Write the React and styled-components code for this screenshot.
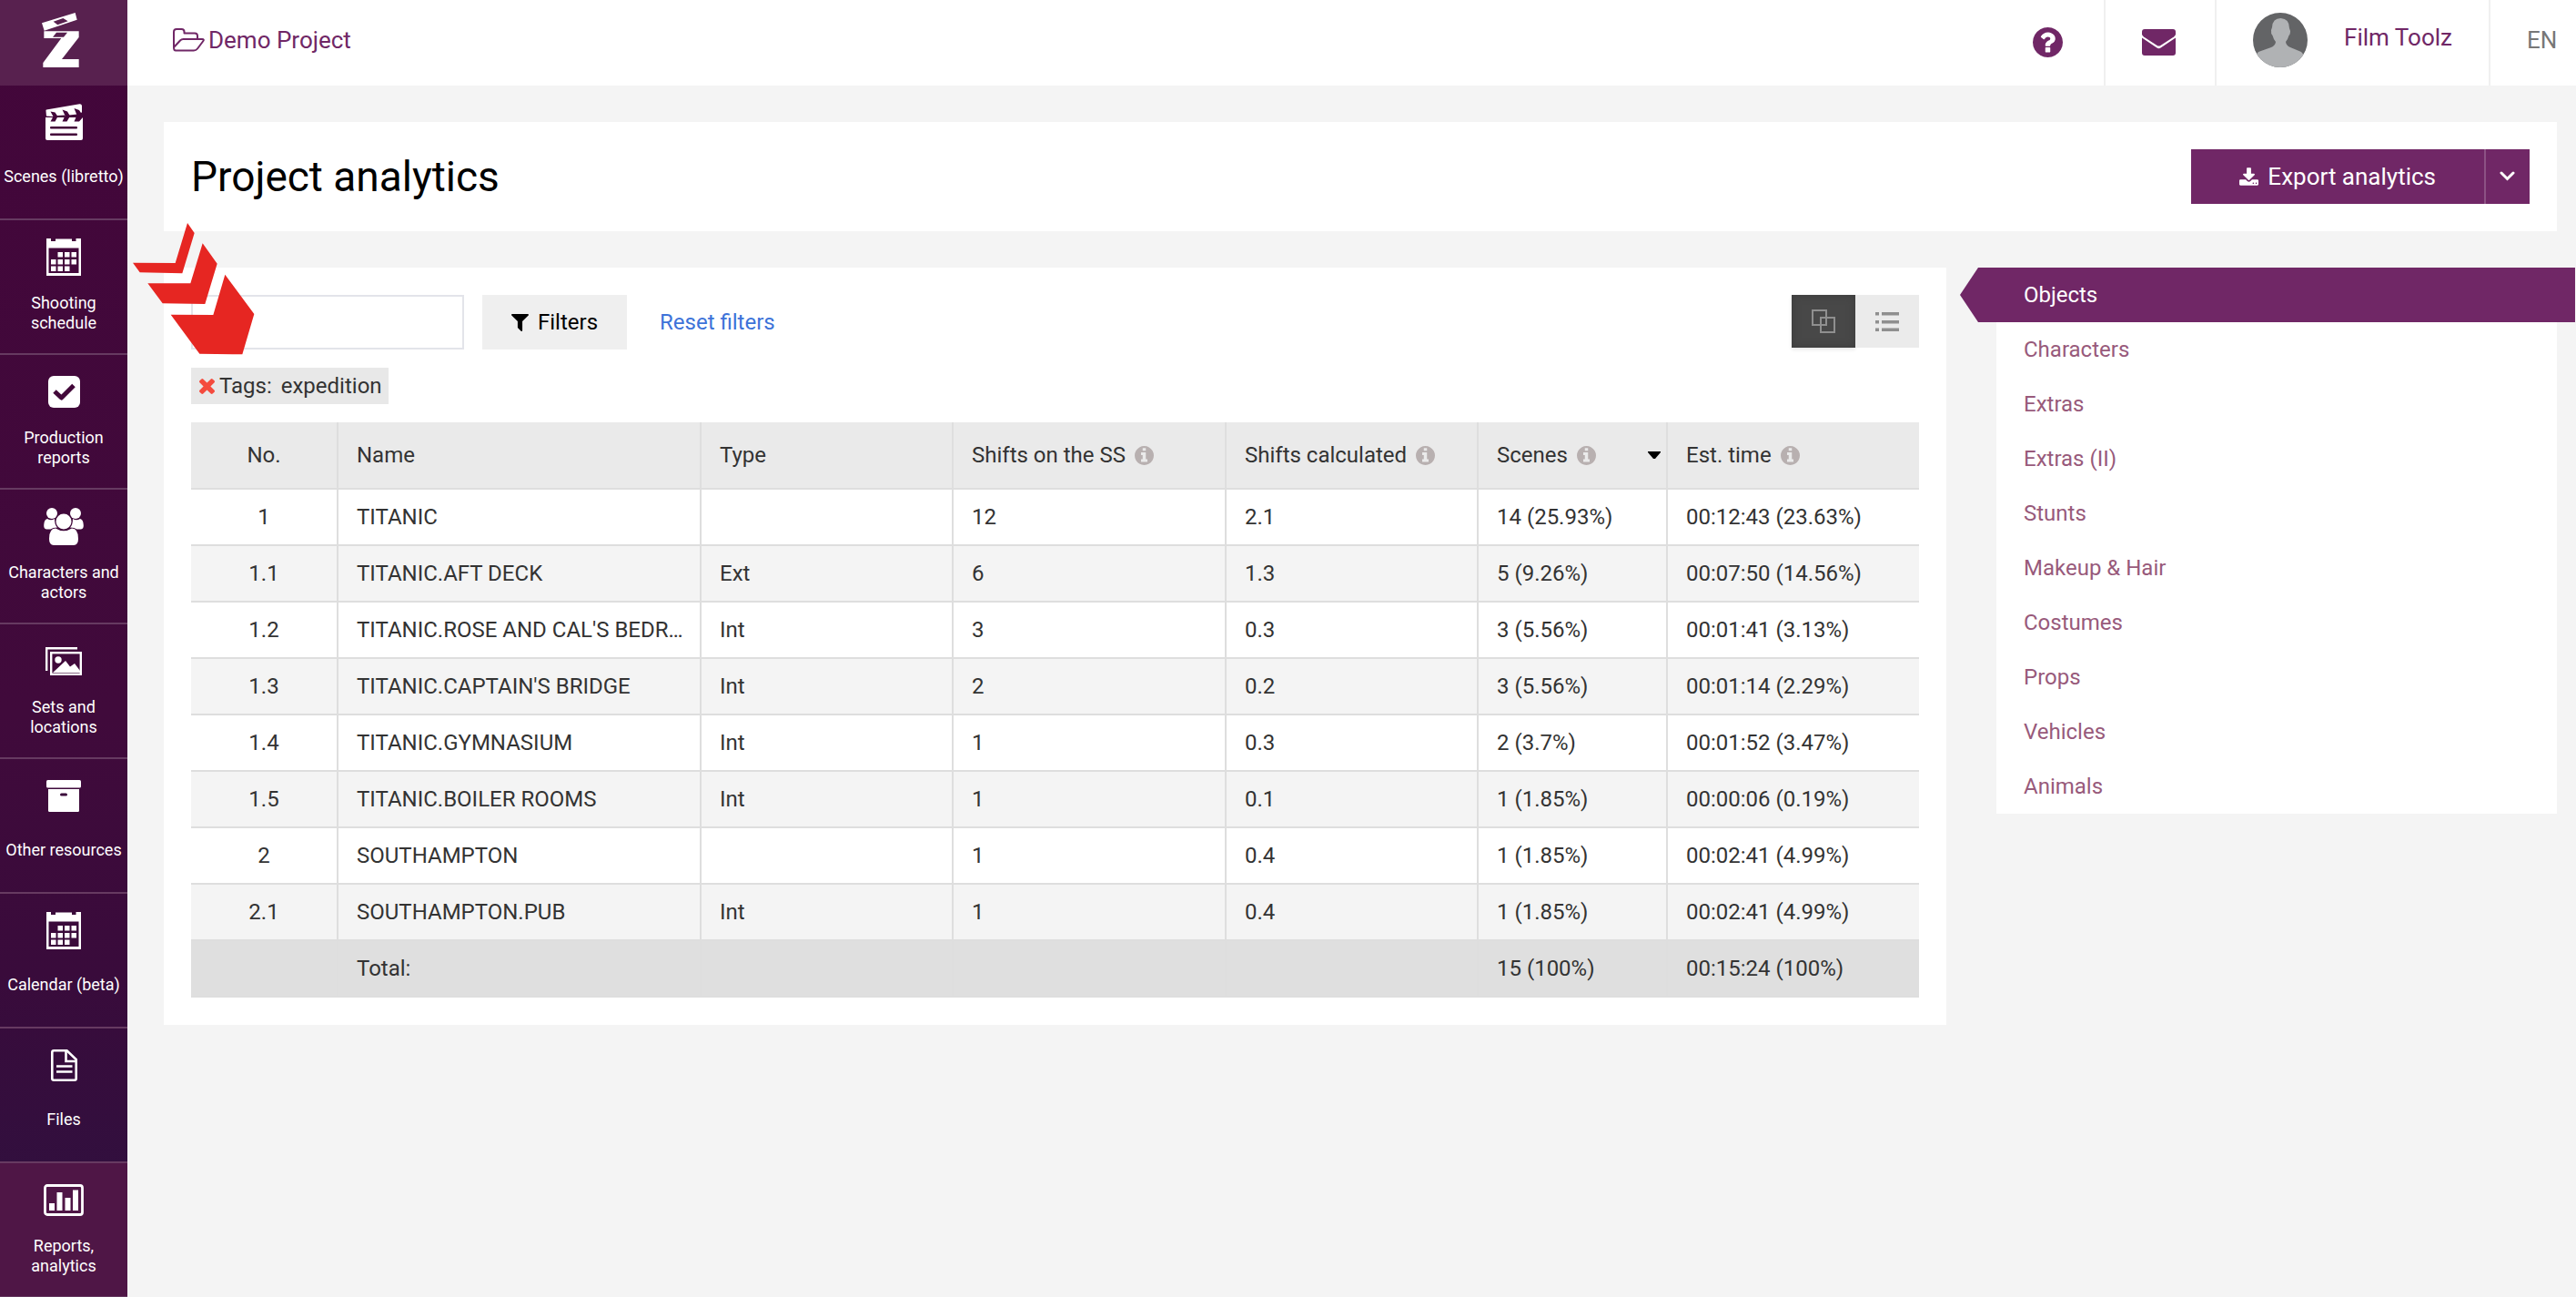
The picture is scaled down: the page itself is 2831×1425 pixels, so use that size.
import styled, { createGlobalStyle } from 'styled-components'

const GlobalStyle = createGlobalStyle`
    * {
        box-sizing: border-box;
    }

    body {
        margin: 0;
        background-color: #f4f4f4;
        color: #333;
        font-family: Roboto, 'Liberation Sans', sans-serif;
        font-size: 24px;
        line-height: 30px;
    }

    button,
    input {
        font: inherit;
    }

    a {
        text-decoration: none;
    }

    svg {
        display: block;
        flex-shrink: 0;
    }
`

const Layout = styled.div`
    display: flex;
    height: 100vh;
`

const Sidebar = styled.nav`
    flex: none;
    width: 140px;
    overflow: hidden;
    background: linear-gradient(#43063a 0%, #400a3b 55%, #390b3b 75%, #320f3e 90%);
`

const Logo = styled.a`
    display: flex;
    align-items: center;
    justify-content: center;
    height: 94px;
    padding: 0 8px 6px 0;
    background-color: #58214f;
    color: #fff;
`

const NavItem = styled.a`
    display: flex;
    flex-direction: column;
    align-items: center;
    height: 148px;
    padding-top: 18px;
    border-bottom: 2px solid #663a61;
    background-color: ${({ $active }) => ($active ? '#4f1646' : 'transparent')};
    color: #fff;
`

const NavIcon = styled.span`
    display: flex;
    align-items: center;
    justify-content: center;
    height: 44px;
`

const NavLabel = styled.span`
    display: flex;
    align-items: center;
    height: ${({ $wrap }) => ($wrap ? '44px' : '40px')};
    margin-top: 18px;
    padding: 0 4px;
    font-weight: 400;
    font-size: 18px;
    line-height: 22px;
    text-align: center;
    white-space: ${({ $wrap }) => ($wrap ? 'normal' : 'nowrap')};
`

const Page = styled.div`
    flex: 1;
    min-width: 0;
`

const Header = styled.header`
    display: flex;
    height: 94px;
    background-color: #fff;
`

const ProjectLink = styled.a`
    display: flex;
    align-items: center;
    gap: 4px;
    margin-right: auto;
    padding: 0 0 6px 50px;
    color: #702766;
    font-size: 26px;
`

const HeaderCell = styled.a`
    display: flex;
    align-items: center;
    justify-content: center;
    width: 122px;
    padding: 0 4px 2px 0;
    border-right: 2px solid #f0f0f0;
    color: #702766;
`

const UserCell = styled(HeaderCell)`
    gap: 40px;
    width: auto;
    padding: 0 40px 6px;
    font-size: 26px;
`

const UserName = styled.span`
    padding-bottom: 6px;
`

const LanguageCell = styled(HeaderCell)`
    justify-content: flex-start;
    width: 94px;
    padding: 0 0 6px 40px;
    border-right: 0;
    color: #777;
    font-size: 26px;
`

const Content = styled.main`
    padding: 40px 21px 40px 40px;
`

const TitleBar = styled.div`
    display: flex;
    align-items: center;
    justify-content: space-between;
    height: 120px;
    margin-bottom: 40px;
    padding: 0 30px;
    background-color: #fff;
`

const Title = styled.h1`
    margin: 0;
    color: #000;
    font-weight: 400;
    font-size: 46px;
    line-height: 56px;
`

const ExportGroup = styled.div`
    display: flex;
    height: 60px;
`

const ExportButton = styled.button`
    display: flex;
    align-items: center;
    gap: 10px;
    padding: 0 53px;
    border: 0;
    border-right: 2px solid #8c5284;
    background-color: #702766;
    color: #fff;
    font-size: 26px;
`

const ExportToggle = styled.button`
    display: flex;
    align-items: center;
    justify-content: center;
    width: 48px;
    padding: 0 2px 2px 0;
    border: 0;
    background-color: #702766;
    color: #fff;
`

const Columns = styled.div`
    display: grid;
    grid-template-columns: minmax(0, 1fr) 616px;
    align-items: start;
    gap: 55px;
`

const Panel = styled.section`
    position: relative;
    padding: 30px;
    background-color: #fff;
`

const Pointer = styled.svg`
    position: absolute;
    top: -49px;
    left: -34px;
`

const Toolbar = styled.div`
    display: flex;
    align-items: flex-start;
    justify-content: space-between;
`

const FilterGroup = styled.div`
    display: flex;
    align-items: center;
    gap: 20px;
`

const SearchInput = styled.input`
    width: 300px;
    height: 60px;
    padding: 0 20px;
    border: 2px solid #e3e4ea;
    background-color: #fff;
`

const FilterButton = styled.button`
    display: flex;
    align-items: center;
    gap: 10px;
    height: 60px;
    padding: 0 32px;
    border: 0;
    background-color: #efefef;
    color: #000;
`

const ResetLink = styled.a`
    margin-left: 16px;
    color: #3d73d9;
`

const ViewSwitch = styled.div`
    display: flex;
`

const ViewButton = styled.button`
    display: flex;
    align-items: center;
    justify-content: center;
    width: 70px;
    height: 58px;
    padding: 0;
    border: 0;
    background-color: ${({ $active }) => ($active ? '#484848' : '#ebebeb')};
    box-shadow: ${({ $active }) => ($active ? 'inset 0 0 10px #3c3c3c, 0 2px 4px rgba(0, 0, 0, 0.1)' : 'none')};
    color: #8f8f8f;
`

const Tag = styled.div`
    display: inline-flex;
    align-items: center;
    gap: 5px;
    height: 40px;
    margin: 20px 0;
    padding: 0 7px 0 9px;
    background-color: #e8e8e8;
    vertical-align: top;
`

const TagRemove = styled.button`
    padding: 0;
    border: 0;
    background: none;
    color: #f44b3e;
`

const TagValue = styled.span`
    margin-left: 5px;
`

const Table = styled.table`
    width: 100%;
    border-spacing: 0;
    table-layout: fixed;
`

const Col = styled.col`
    width: ${({ $width }) => ($width ? `${$width}px` : 'auto')};
`

const HeadCell = styled.th`
    height: 74px;
    padding: 0 6px 0 20px;
    border-right: 2px solid #dedede;
    border-bottom: 2px solid #dedede;
    background-color: #eaeaea;
    font-weight: 400;
    text-align: left;

    &:first-child {
        padding: 0;
    }

    &:last-child {
        border-right: 0;
    }
`

const HeadLabel = styled.div`
    display: flex;
    align-items: center;
    justify-content: ${({ $center }) => ($center ? 'center' : 'flex-start')};
    gap: 10px;
    color: #333;
`

const InfoIcon = styled.span`
    color: #b8b0b0;
`

const SortIcon = styled.span`
    margin-left: auto;
    color: #000;
`

const Row = styled.tr`
    &:nth-child(even) {
        background-color: #f4f4f4;
    }
`

const Cell = styled.td`
    height: 62px;
    padding: 0 10px 0 20px;
    overflow: hidden;
    border-right: 2px solid #dedede;
    border-bottom: 2px solid #dedede;
    text-overflow: ellipsis;
    white-space: nowrap;

    &:first-child {
        padding: 0;
        text-align: center;
    }

    &:last-child {
        border-right: 0;
    }
`

const TotalRow = styled.tr`
    background-color: #dfdfdf;
`

const Menu = styled.nav`
    background-color: #fff;
`

const MenuItem = styled.a`
    display: flex;
    align-items: center;
    height: 60px;
    padding: 0 30px;
    color: #985a7b;
`

const ActiveMenuItem = styled(MenuItem)`
    margin: 0 -20px 0 -40px;
    padding-left: 70px;
    background-color: #702766;
    clip-path: polygon(0 50%, 20px 0, 100% 0, 100% 100%, 20px 100%);
    color: #fff;
`

const LogoMark = () => (
    <svg width="41" height="60" viewBox="136 42 123 180" fill="currentColor">
        <path fillRule="evenodd" d="M136 76L246 42L252 65L144 101Z M174 71L206 60L222 70L188 82Z" />
        <path fillRule="evenodd" d="M143 103H258V123L202 195H258V222H140V207L200 126H143Z M172 122L184 107H220L208 122Z" />
    </svg>
)

const ClapperIcon = () => (
    <svg width="41" height="40" viewBox="0 0 41 40">
        <path fill="#fff" d="M1 6.500Q.2 6.500 .5 8L1 14H40L40 2Q39.500 0 37.500 .2Z" />
        <path fill="#fff" d="M0 15H41V38Q41 40 39 40H2Q0 40 0 38Z" />
        <g fill="#43063a">
            <path d="M5.500 8.500L10.500 9.500L13.500 14L10.500 19.500H5.500L8.500 14Z" />
            <path d="M18.500 6.500L24 8.500L27 13.500L23.500 19.500H18.500L21.500 13Z" />
            <path d="M31.500 5L37 7L39 10L41 8.500V15L37 19.500H31.500L34.500 12.500Z" />
            <path d="M0 13.500L8 14L0 15Z M13 13L21.500 12.500V14.500L13 14.500Z M26 12.500L35 11.500V14L26 14Z" />
            <rect x="5" y="25" width="30" height="2.500" rx="1" />
            <rect x="5" y="32.500" width="30" height="2.500" rx="1" />
        </g>
    </svg>
)

const calendarDays = [
    [12.5, 15], [20, 15], [27.5, 15],
    [5, 23], [12.5, 23], [20, 23], [27.5, 23],
    [5, 30.5], [12.5, 30.5], [20, 30.5],
]

const CalendarIcon = () => (
    <svg width="38" height="41" viewBox="0 0 38 41" fill="#fff">
        <path fillRule="evenodd" d="M0 0H5V3H10V0.500H28V3H32.500V0H38V41H0Z M2.500 10.500V38H35.500V10.500Z" />
        {calendarDays.map(([x, y]) => (
            <rect key={`${x}-${y}`} x={x} y={y} width="5.500" height="5.500" />
        ))}
    </svg>
)

const CheckIcon = () => (
    <svg width="35" height="35" viewBox="0 0 35 35">
        <rect width="35" height="35" rx="6" fill="#fff" />
        <path d="M7 17L14.500 24L28 10.500" fill="none" stroke="#420839" strokeWidth="5" strokeLinejoin="round" />
    </svg>
)

const PeopleIcon = () => (
    <svg width="44" height="41" viewBox="0 0 44 41" fill="#fff">
        <circle cx="9" cy="6" r="6" />
        <circle cx="35" cy="6" r="6" />
        <path d="M4 12Q8 14.500 12 12Q12 19 15 21.500Q10 21.500 7.500 23.500H3Q0 23 .2 19Q.5 12.500 4 12Z" />
        <path d="M40 12Q36 14.500 32 12Q32 19 29 21.500Q34 21.500 36.500 23.500H41Q44 23 43.800 19Q43.500 12.500 40 12Z" />
        <circle cx="22" cy="15" r="8.500" />
        <path d="M13 22.500Q22 28 31 22.500Q38 22.500 38 34Q38 41 33 41H11Q6 41 6 34Q6 22.500 13 22.500Z" />
    </svg>
)

const PicturesIcon = () => (
    <svg width="40" height="31" viewBox="0 0 40 31">
        <path d="M1.200 26V1.200H35" fill="none" stroke="#fff" strokeWidth="2.400" />
        <rect x="6.200" y="6.200" width="32.600" height="23.600" fill="none" stroke="#fff" strokeWidth="2.400" />
        <circle cx="14" cy="14" r="3.700" fill="#fff" />
        <path d="M8 28L22 15L27 21.500L32 18L38 26V28Z" fill="#fff" />
    </svg>
)

const BoxIcon = () => (
    <svg width="38" height="35" viewBox="0 0 38 35">
        <rect width="38" height="8.500" rx="1.500" fill="#fff" />
        <path d="M2 10H36V33.500Q36 35 34.500 35H3.500Q2 35 2 33.500Z" fill="#fff" />
        <rect x="15" y="14.500" width="8" height="3" rx="1.500" fill="#3b0a3b" />
    </svg>
)

const FileIcon = () => (
    <svg width="29" height="35" viewBox="0 0 29 35" fill="none" stroke="#fff" strokeWidth="2.600">
        <path d="M3 1.300H17.500L27.700 11V32Q27.700 33.700 26 33.700H3Q1.300 33.700 1.300 32V3Q1.300 1.300 3 1.300Z" />
        <path d="M16.500 1.500V13H27.500 M6 18.500H23.500 M6 24.500H23.500" />
    </svg>
)

const ChartIcon = () => (
    <svg width="44" height="35" viewBox="0 0 44 35" fill="#fff">
        <rect x="1.500" y="1.500" width="41" height="32" rx="2.500" fill="none" stroke="#fff" strokeWidth="2.800" />
        <path d="M6 21H12V29H6Z M14.500 9H20.500V29H14.500Z M23.500 15H29.500V29H23.500Z M32 6.500H38V29H32Z" />
    </svg>
)

const FolderIcon = () => (
    <svg width="35" height="26" viewBox="0 0 35 26" fill="none" stroke="currentColor" strokeWidth="2" strokeLinejoin="round">
        <path d="M1 21V4Q1 1 4 1H9.500Q12.500 1 12.500 4V5.500H24Q27 5.500 27 8.500V12" />
        <path d="M1 21L8 13.500Q9.500 12 11.500 12H32Q35 12 33 14.500L27 22.500Q25.500 24.500 23 24.500H3Q1 24.500 1 21Z" />
    </svg>
)

const HelpIcon = () => (
    <svg width="33" height="33" viewBox="128 128 1536 1536" fill="currentColor">
        <path d="M1024 1376v-192q0-14-9-23t-23-9h-192q-14 0-23 9t-9 23v192q0 14 9 23t23 9h192q14 0 23-9t9-23zm256-672q0-88-55.500-163t-138.500-116-170-41q-243 0-371 213-15 24 8 42l132 100q7 6 19 6 16 0 25-12 53-68 86-92 34-24 86-24 48 0 85.500 26t37.500 59q0 38-20 61t-68 45q-63 28-115.500 86.500t-52.500 125.500v36q0 14 9 23t23 9h192q14 0 23-9t9-23q0-19 21.500-49.500t54.500-49.500q32-18 49-28.500t46-35 44.500-48 28-60.500 12.500-81zm384 192q0 209-103 385.500t-279.500 279.500-385.500 103-385.500-103-279.500-279.500-103-385.500 103-385.500 279.500-279.500 385.500-103 385.500 103 279.500 279.500 103 385.500z" />
    </svg>
)

const MailIcon = () => (
    <svg width="37" height="29" viewBox="0 0 37 29" fill="currentColor">
        <path d="M3 0H34Q37 0 37 3V5.500Q37 7 35 8.500L20 18.200Q18.500 19 17 18.200L2 8.500Q0 7 0 5.500V3Q0 0 3 0Z" />
        <path d="M0 9.500L16 20.300Q18.500 22 21 20.300L37 9.500V26Q37 29 34 29H3Q0 29 0 26Z" />
    </svg>
)

const Avatar = () => (
    <svg width="60" height="60" viewBox="0 0 60 60">
        <clipPath id="avatar">
            <circle cx="30" cy="30" r="30" />
        </clipPath>
        <g clipPath="url(#avatar)">
            <rect width="60" height="60" fill="#636466" />
            <path
                d="M30.500 6Q40 6.500 40 17L41 20Q41 24 39.500 25Q38 30 36 32Q36.500 36 41 38L53 43Q56 45 60 60H0Q2 46 6 43L20 38Q24.500 36 25 32Q22.500 29 21.500 25Q19.500 23 20 19L21 16Q21.500 6 30.500 6Z"
                fill="#b0b2b4"
            />
        </g>
    </svg>
)

const DownloadIcon = () => (
    <svg width="21" height="20" viewBox="64 0 1664 1536" fill="currentColor">
        <path d="M1344 1344q0-26-19-45t-45-19-45 19-19 45 19 45 45 19 45-19 19-45zm256 0q0-26-19-45t-45-19-45 19-19 45 19 45 45 19 45-19 19-45zm128-224v320q0 40-28 68t-68 28h-1472q-40 0-68-28t-28-68v-320q0-40 28-68t68-28h465l135 136q58 56 136 56t136-56l136-136h464q40 0 68 28t28 68zm-325-569q17 41-14 70l-448 448q-18 19-45 19t-45-19l-448-448q-31-29-14-70 17-39 59-39h256v-448q0-26 19-45t45-19h256q26 0 45 19t19 45v448h256q42 0 59 39z" />
    </svg>
)

const ChevronIcon = () => (
    <svg width="17" height="11" viewBox="0 0 17 11" fill="none" stroke="currentColor" strokeWidth="3" strokeLinecap="round">
        <path d="M2 2L8.500 8.500L15 2" />
    </svg>
)

const FunnelIcon = () => (
    <svg width="19" height="19" viewBox="192 256 1410 1410" fill="currentColor">
        <path d="M1595 295q17 41-14 70l-493 493v742q0 42-39 59-13 5-25 5-27 0-45-19l-256-256q-19-19-19-45v-486l-493-493q-31-29-14-70 17-39 59-39h1280q42 0 59 39z" />
    </svg>
)

const CrossIcon = () => (
    <svg width="17" height="17" viewBox="302 366 1188 1188" fill="currentColor">
        <path d="M1490 1322q0 40-28 68l-136 136q-28 28-68 28t-68-28l-294-294-294 294q-28 28-68 28t-68-28l-136-136q-28-28-28-68t28-68l294-294-294-294q-28-28-28-68t28-68l136-136q28-28 68-28t68 28l294 294 294-294q28-28 68-28t68 28l136 136q28 28 28 68t-28 68l-294 294 294 294q28 28 28 68z" />
    </svg>
)

const InfoMark = () => (
    <svg width="21" height="21" viewBox="128 128 1536 1536" fill="currentColor">
        <path d="M1152 1376v-160q0-14-9-23t-23-9h-96v-512q0-14-9-23t-23-9h-320q-14 0-23 9t-9 23v160q0 14 9 23t23 9h96v320h-96q-14 0-23 9t-9 23v160q0 14 9 23t23 9h448q14 0 23-9t9-23zm-128-896v-160q0-14-9-23t-23-9h-192q-14 0-23 9t-9 23v160q0 14 9 23t23 9h192q14 0 23-9t9-23zm640 416q0 209-103 385.500t-279.500 279.500-385.500 103-385.500-103-279.500-279.500-103-385.500 103-385.500 279.500-279.500 385.500-103 385.500 103 279.500 279.500 103 385.500z" />
    </svg>
)

const CaretIcon = () => (
    <svg width="14" height="8" viewBox="0 0 14 8" fill="currentColor">
        <path d="M0 0H14V1L8 8H6L0 1Z" />
    </svg>
)

const GroupedIcon = () => (
    <svg width="26" height="26" viewBox="0 0 26 26" fill="none" stroke="currentColor" strokeWidth="2">
        <rect x="1" y="1" width="15" height="16" />
        <rect x="10" y="9" width="15" height="16" />
    </svg>
)

const ListIcon = () => (
    <svg width="26" height="21" viewBox="0 0 26 21" fill="currentColor">
        <path d="M0 0H4V3.500H0Z M7 0H26V3.500H7Z M0 9H4V12.500H0Z M7 9H26V12.500H7Z M0 17.500H4V21H0Z M7 17.500H26V21H7Z" />
    </svg>
)

const navItems = [
    { label: 'Scenes (libretto)', icon: ClapperIcon },
    { label: 'Shooting schedule', icon: CalendarIcon, wrap: true },
    { label: 'Production reports', icon: CheckIcon, wrap: true },
    { label: 'Characters and actors', icon: PeopleIcon, wrap: true },
    { label: 'Sets and locations', icon: PicturesIcon, wrap: true },
    { label: 'Other resources', icon: BoxIcon },
    { label: 'Calendar (beta)', icon: CalendarIcon },
    { label: 'Files', icon: FileIcon },
    { label: 'Reports, analytics', icon: ChartIcon, wrap: true, active: true },
]

const columns = [
    { label: 'No.', width: 162, center: true },
    { label: 'Name' },
    { label: 'Type', width: 277 },
    { label: 'Shifts on the SS', width: 300, info: true },
    { label: 'Shifts calculated', width: 277, info: true },
    { label: 'Scenes', width: 208, info: true, sorted: true },
    { label: 'Est. time', width: 276, info: true },
]

const rows = [
    ['1', 'TITANIC', '', '12', '2.1', '14 (25.93%)', '00:12:43 (23.63%)'],
    ['1.1', 'TITANIC.AFT DECK', 'Ext', '6', '1.3', '5 (9.26%)', '00:07:50 (14.56%)'],
    ['1.2', "TITANIC.ROSE AND CAL'S BEDR…", 'Int', '3', '0.3', '3 (5.56%)', '00:01:41 (3.13%)'],
    ['1.3', "TITANIC.CAPTAIN'S BRIDGE", 'Int', '2', '0.2', '3 (5.56%)', '00:01:14 (2.29%)'],
    ['1.4', 'TITANIC.GYMNASIUM', 'Int', '1', '0.3', '2 (3.7%)', '00:01:52 (3.47%)'],
    ['1.5', 'TITANIC.BOILER ROOMS', 'Int', '1', '0.1', '1 (1.85%)', '00:00:06 (0.19%)'],
    ['2', 'SOUTHAMPTON', '', '1', '0.4', '1 (1.85%)', '00:02:41 (4.99%)'],
    ['2.1', 'SOUTHAMPTON.PUB', 'Int', '1', '0.4', '1 (1.85%)', '00:02:41 (4.99%)'],
]

const totals = ['', 'Total:', '', '', '', '15 (100%)', '00:15:24 (100%)']

const menuItems = ['Characters', 'Extras', 'Extras (II)', 'Stunts', 'Makeup & Hair', 'Costumes', 'Props', 'Vehicles', 'Animals']

const AnalyticsTable = () => {
    return (
        <Table>
            <colgroup>
                {columns.map(({ label, width }) => (
                    <Col key={label} $width={width} />
                ))}
            </colgroup>
            <thead>
                <tr>
                    {columns.map(({ label, center, info, sorted }) => (
                        <HeadCell key={label} scope="col">
                            <HeadLabel $center={center}>
                                {label}
                                {info && <InfoIcon><InfoMark /></InfoIcon>}
                                {sorted && <SortIcon><CaretIcon /></SortIcon>}
                            </HeadLabel>
                        </HeadCell>
                    ))}
                </tr>
            </thead>
            <tbody>
                {rows.map((row) => (
                    <Row key={row[0]}>
                        {row.map((value, i) => (
                            <Cell key={i}>{value}</Cell>
                        ))}
                    </Row>
                ))}
            </tbody>
            <tfoot>
                <TotalRow>
                    {totals.map((value, i) => (
                        <Cell key={i}>{value}</Cell>
                    ))}
                </TotalRow>
            </tfoot>
        </Table>
    )
}

const App = () => {
    return (
        <Layout>
            <GlobalStyle />

            <Sidebar>
                <Logo href="#" aria-label="Home">
                    <LogoMark />
                </Logo>
                {navItems.map(({ label, icon: Icon, wrap, active }) => (
                    <NavItem key={label} href="#" $active={active}>
                        <NavIcon><Icon /></NavIcon>
                        <NavLabel $wrap={wrap}>{label}</NavLabel>
                    </NavItem>
                ))}
            </Sidebar>

            <Page>
                <Header>
                    <ProjectLink href="#">
                        <FolderIcon />
                        Demo Project
                    </ProjectLink>
                    <HeaderCell href="#" aria-label="Help"><HelpIcon /></HeaderCell>
                    <HeaderCell href="#" aria-label="Messages"><MailIcon /></HeaderCell>
                    <UserCell href="#">
                        <Avatar />
                        <UserName>Film Toolz</UserName>
                    </UserCell>
                    <LanguageCell href="#">EN</LanguageCell>
                </Header>

                <Content>
                    <TitleBar>
                        <Title>Project analytics</Title>
                        <ExportGroup>
                            <ExportButton type="button">
                                <DownloadIcon />
                                Export analytics
                            </ExportButton>
                            <ExportToggle type="button" aria-label="More export options">
                                <ChevronIcon />
                            </ExportToggle>
                        </ExportGroup>
                    </TitleBar>

                    <Columns>
                        <Panel>
                            <Toolbar>
                                <FilterGroup>
                                    <SearchInput type="search" aria-label="Search" />
                                    <FilterButton type="button">
                                        <FunnelIcon />
                                        Filters
                                    </FilterButton>
                                    <ResetLink href="#">Reset filters</ResetLink>
                                </FilterGroup>
                                <ViewSwitch>
                                    <ViewButton type="button" aria-label="Grouped view" $active>
                                        <GroupedIcon />
                                    </ViewButton>
                                    <ViewButton type="button" aria-label="List view">
                                        <ListIcon />
                                    </ViewButton>
                                </ViewSwitch>
                            </Toolbar>

                            <Tag>
                                <TagRemove type="button" aria-label="Remove tag filter">
                                    <CrossIcon />
                                </TagRemove>
                                Tags:
                                <TagValue>expedition</TagValue>
                            </Tag>

                            <AnalyticsTable />

                            <Pointer width="134" height="145" viewBox="437 735 402 435" fill="#e62622">
                                <path d="M617 735L640 768L600 901L460 898L437 866L577 867Z" />
                                <path d="M667 802L715 869L675 1002L535 1000L486 934L627 934Z" />
                                <path d="M741 905L837 1035L798 1168L657 1166L562 1037L702 1038Z" />
                            </Pointer>
                        </Panel>

                        <Menu>
                            <ActiveMenuItem href="#" aria-current="page">Objects</ActiveMenuItem>
                            {menuItems.map((item) => (
                                <MenuItem key={item} href="#">{item}</MenuItem>
                            ))}
                        </Menu>
                    </Columns>
                </Content>
            </Page>
        </Layout>
    )
}

export default App
